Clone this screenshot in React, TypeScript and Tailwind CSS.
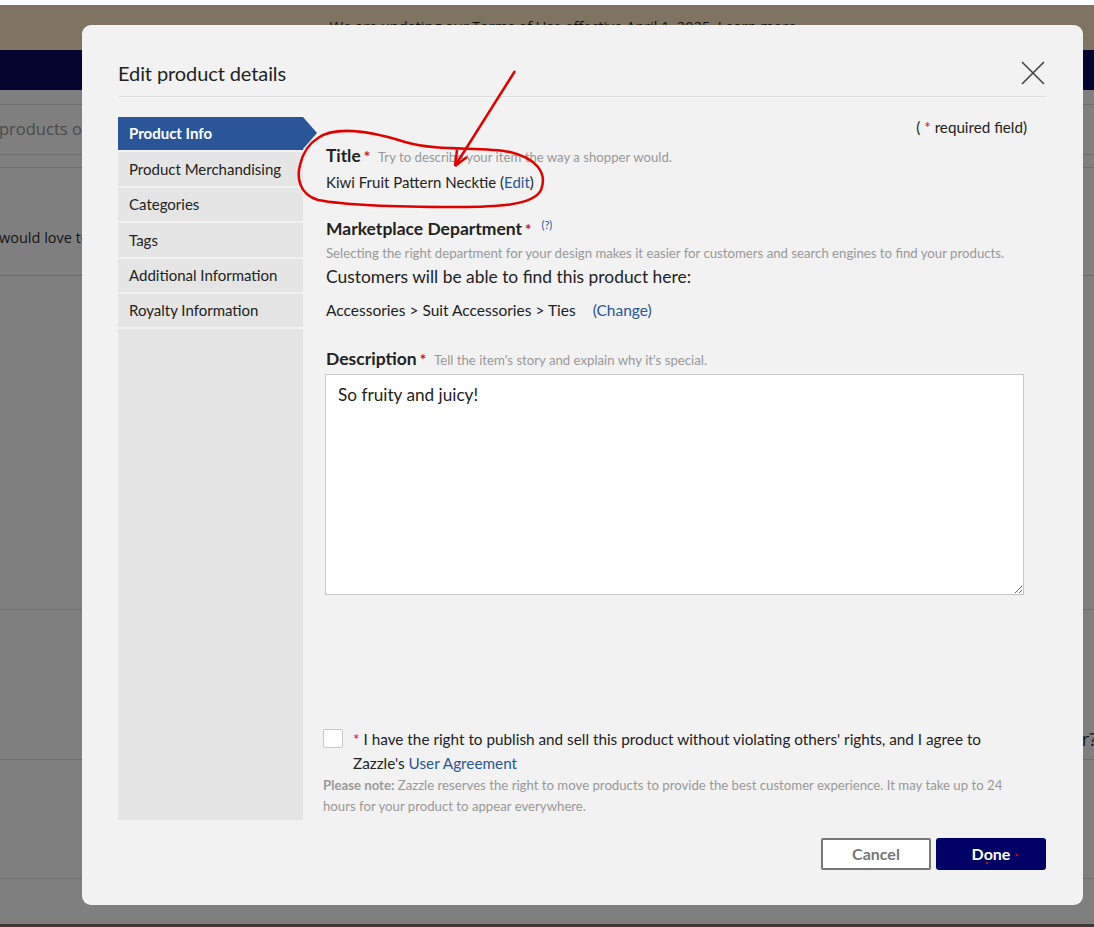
import React from "react";

const navItems = [
  "Product Info",
  "Product Merchandising",
  "Categories",
  "Tags",
  "Additional Information",
  "Royalty Information",
];

function Req() {
  return <span className="text-[#c8102e] font-bold ml-[3px] text-[15px]">*</span>;
}

export default function App() {
  return (
    <div className="relative w-[1094px] h-[927px] overflow-hidden bg-[#7f7f7f] font-['Lato',sans-serif]">
      {/* Background page (dimmed) */}
      <div className="flex flex-col h-full">
        <div className="h-[5px] bg-white" />
        <div className="h-[45px] bg-[#7f7462] flex justify-center pt-[13px] pl-[36px]">
          <span className="text-[14.5px] text-[#111] font-['Open_Sans',sans-serif] leading-[18px]">
            We are updating our Terms of Use effective April 1, 2025. Learn more.
          </span>
        </div>
        <div className="h-[40px] bg-[#04042e]" />
        <div className="relative flex-1 flex flex-col">
          <div className="h-[15px] border-b border-[#6e6e6e]" />
          <div className="h-[50px] border-b border-[#6e6e6e] flex items-center text-[16.5px] text-[#4a4a4a] font-['Open_Sans',sans-serif] -ml-[1px]">
            products on
          </div>
          <div className="h-[13px] border-b border-[#6e6e6e]" />
          <div className="h-[108px] border-b border-[#6e6e6e] pt-[60px] leading-[20px] text-[14.5px] text-[#151515] font-['Open_Sans',sans-serif] -ml-[1px]">
            would love to
          </div>
          <div className="h-[334px] border-b border-[#6e6e6e]" />
          <div className="h-[150px] border-b border-[#6e6e6e] flex items-end justify-end pb-[6px] text-[18px] text-[#151515] font-['Open_Sans',sans-serif] -mr-[3px]">
            r?
          </div>
          <div className="h-[119px] border-b border-[#6e6e6e]" />
          <div className="flex-1" />
          <div className="h-[3px] bg-[#3c3730]" />
        </div>
      </div>

      {/* Modal */}
      <div className="absolute left-[82px] top-[25px] w-[1001px] h-[880px] rounded-[9px] bg-[#f2f2f2] pl-[36px] pr-[37px] flex flex-col">
        <div className="h-[72px] pt-[24px] flex items-center justify-between border-b border-[#dedede]">
          <span className="text-[20px] text-[#222] tracking-[-0.1px]">Edit product details</span>
          <svg width="24" height="24" viewBox="0 0 24 24" className="mr-[1px]">
            <path d="M1 1 L23 23 M23 1 L1 23" stroke="#444" strokeWidth="1.6" fill="none" />
          </svg>
        </div>

        <div className="mt-[20px] flex">
          {/* Sidebar */}
          <div className="w-[185px] h-[703px] bg-[#e5e5e5] flex flex-col shrink-0">
            {navItems.map((item, i) => (
              <div
                key={item}
                className={
                  i === 0
                    ? "relative h-[35.4px] border-b-2 border-[#f2f2f2] bg-[#2a5699] text-white font-bold text-[15px] flex items-center pl-[11px]"
                    : "h-[35.4px] border-b-2 border-[#f2f2f2] text-[#222] text-[15px] flex items-center pl-[11px]"
                }
              >
                {item}
                {i === 0 && (
                  <span className="absolute right-[-14px] top-0 w-0 h-0 border-y-[16.5px] border-y-transparent border-l-[14px] border-l-[#2a5699]" />
                )}
              </div>
            ))}
          </div>

          {/* Content */}
          <div className="flex-1 min-w-0 pl-[23px] pr-[19px] flex flex-col text-[#222]">
            <div className="h-[20px] leading-[20px] text-right text-[15.2px]">
              ( <span className="text-[#c8102e]">*</span> required field)
            </div>
            <div className="mt-[9px] h-[20px] leading-[20px] flex items-baseline">
              <span className="text-[17.3px] font-bold">Title</span>
              <Req />
              <span className="ml-[8px] text-[13.2px] text-[#999]">Try to describe your item the way a shopper would.</span>
            </div>
            <div className="mt-[6px] h-[20px] leading-[20px] text-[15px]">
              Kiwi Fruit Pattern Necktie (<span className="text-[#2a5699]">Edit</span>)
            </div>
            <div className="mt-[27px] h-[20px] leading-[20px] flex items-baseline">
              <span className="text-[17.5px] font-bold">Marketplace Department</span>
              <Req />
              <span className="ml-[10px] text-[11px] text-[#2a5699] relative -top-[6px]">(?)</span>
            </div>
            <div className="mt-[6px] h-[16px] leading-[16px] text-[13.2px] text-[#999] whitespace-nowrap">
              Selecting the right department for your design makes it easier for customers and search engines to find your products.
            </div>
            <div className="mt-[5px] h-[22px] leading-[22px] text-[17.4px]">
              Customers will be able to find this product here:
            </div>
            <div className="mt-[12px] h-[20px] leading-[20px] text-[15.5px]">
              Accessories &gt; Suit Accessories &gt; Ties
              <span className="ml-[17px] text-[#2a5699]">(Change)</span>
            </div>
            <div className="mt-[29px] h-[20px] leading-[20px] flex items-baseline">
              <span className="text-[17.5px] font-bold">Description</span>
              <Req />
              <span className="ml-[8px] text-[13.2px] text-[#999]">Tell the item's story and explain why it's special.</span>
            </div>
            <textarea
              className="mt-[5px] -ml-px w-[699px] h-[221px] bg-white border border-[#c8c8c8] px-[12px] py-[9px] text-[17.2px] leading-[22px] text-[#222] font-['Lato',sans-serif] outline-none"
              defaultValue="So fruity and juicy!"
            />
            <div className="mt-[132px] -ml-[3px] flex">
              <div className="mt-[2px] w-[20px] h-[19px] bg-white border border-[#c8c8c8] rounded-[2px] shrink-0" />
              <div className="ml-[10px] text-[15.3px] leading-[24px] text-[#222] whitespace-nowrap">
                <span className="text-[#c8102e] mr-[4px]">*</span>
                I have the right to publish and sell this product without violating others' rights, and I agree to
                <br />
                Zazzle's <span className="text-[#2a5699]">User Agreement</span>
              </div>
            </div>
            <div className="-ml-[3px] w-[700px] text-[13.2px] leading-[21px] text-[#999] whitespace-nowrap">
              <span className="font-bold">Please note:</span> Zazzle reserves the right to move products to provide the best customer experience. It may take up to 24
              <br />
              hours for your product to appear everywhere.
            </div>
          </div>
        </div>

        <div className="mt-[18px] flex justify-end gap-[5px]">
          <button className="w-[110px] h-[32px] bg-white border-2 border-[#777] rounded-[2px] text-[16px] font-bold text-[#777]">
            Cancel
          </button>
          <button className="w-[110px] h-[32px] bg-[#000066] rounded-[3px] text-[16px] font-bold text-white">
            Done
          </button>
        </div>
      </div>

      {/* Red annotation */}
      <svg className="absolute left-0 top-0 pointer-events-none" width="1094" height="927" viewBox="0 0 1094 927">
        <path
          d="M318 138 C335 126 370 131 405 142 C440 152 480 146 510 152 C535 158 548 172 541 190 C533 206 495 207 455 207 C410 207 350 206 318 200 C298 194 297 176 300 165 C303 152 310 143 318 138"
          stroke="#e00000"
          strokeWidth="2.5"
          fill="none"
        />
        <path d="M515 71 L455 166" stroke="#e00000" strokeWidth="2.5" fill="none" />
        <path d="M455 166 L457 150 M455 166 L467 157" stroke="#e00000" strokeWidth="2.5" fill="none" />
        <circle cx="1017" cy="855" r="1.2" fill="#e00000" />
        <circle cx="987" cy="863" r="1.2" fill="#e00000" />
      </svg>
    </div>
  );
}
